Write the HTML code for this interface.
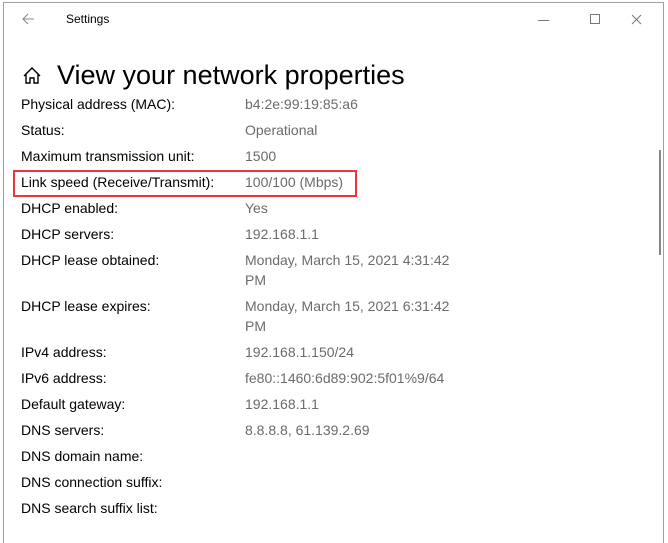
<!DOCTYPE html>
<html><head><style>
body{margin:0;width:668px;height:529px;background:#fff;position:relative;overflow:hidden;font-family:"Liberation Sans",sans-serif;}
.win{position:absolute;left:3px;top:2px;width:659px;height:540px;border:1px solid #a0a0a0;border-bottom:none;}
.t{position:absolute;font-size:14px;white-space:nowrap;line-height:20px;}
.l{left:21px;color:#000;}
.v{left:245px;color:#6b6b6b;}
</style></head><body>
<div class="win"></div>
<svg style="position:absolute;left:20px;top:11px" width="16" height="16"><path d="M14 8H3M8 3L3 8l5 5" fill="none" stroke="#888" stroke-width="1"/></svg>
<div class="t" style="left:66px;top:9px;font-size:12px;color:#000">Settings</div>
<svg style="position:absolute;left:535px;top:12px" width="120" height="16"><path d="M3 8.5h11" stroke="#777"/><rect x="55.5" y="2.5" width="9" height="9" fill="none" stroke="#777"/><path d="M97 3l9 9M106 3l-9 9" stroke="#777"/></svg>
<svg style="position:absolute;left:22px;top:66px" width="20" height="20"><path d="M2 10L10 2l8 8M4 8v9h4v-5h4v5h4V8" fill="none" stroke="#000" stroke-width="1.4"/></svg>
<div class="t" style="left:57px;top:58px;font-size:27px;line-height:34px;color:#000">View your network properties</div>
<div style="position:absolute;left:659px;top:150px;width:2px;height:105px;background:#888"></div>
<div style="position:absolute;left:13px;top:170px;width:340px;height:23px;border:2px solid #e8383d"></div>
<div class="t l" style="top:94px">Physical address (MAC):</div><div class="t v" style="top:94px">b4:2e:99:19:85:a6</div>
<div class="t l" style="top:120px">Status:</div><div class="t v" style="top:120px">Operational</div>
<div class="t l" style="top:146px">Maximum transmission unit:</div><div class="t v" style="top:146px">1500</div>
<div class="t l" style="top:172px">Link speed (Receive/Transmit):</div><div class="t v" style="top:172px">100/100 (Mbps)</div>
<div class="t l" style="top:198px">DHCP enabled:</div><div class="t v" style="top:198px">Yes</div>
<div class="t l" style="top:224px">DHCP servers:</div><div class="t v" style="top:224px">192.168.1.1</div>
<div class="t l" style="top:250px">DHCP lease obtained:</div><div class="t v" style="top:250px">Monday, March 15, 2021 4:31:42</div><div class="t v" style="top:270px">PM</div>
<div class="t l" style="top:296px">DHCP lease expires:</div><div class="t v" style="top:296px">Monday, March 15, 2021 6:31:42</div><div class="t v" style="top:316px">PM</div>
<div class="t l" style="top:342px">IPv4 address:</div><div class="t v" style="top:342px">192.168.1.150/24</div>
<div class="t l" style="top:368px">IPv6 address:</div><div class="t v" style="top:368px">fe80::1460:6d89:902:5f01%9/64</div>
<div class="t l" style="top:394px">Default gateway:</div><div class="t v" style="top:394px">192.168.1.1</div>
<div class="t l" style="top:420px">DNS servers:</div><div class="t v" style="top:420px">8.8.8.8, 61.139.2.69</div>
<div class="t l" style="top:446px">DNS domain name:</div>
<div class="t l" style="top:472px">DNS connection suffix:</div>
<div class="t l" style="top:498px">DNS search suffix list:</div>
</body></html>
